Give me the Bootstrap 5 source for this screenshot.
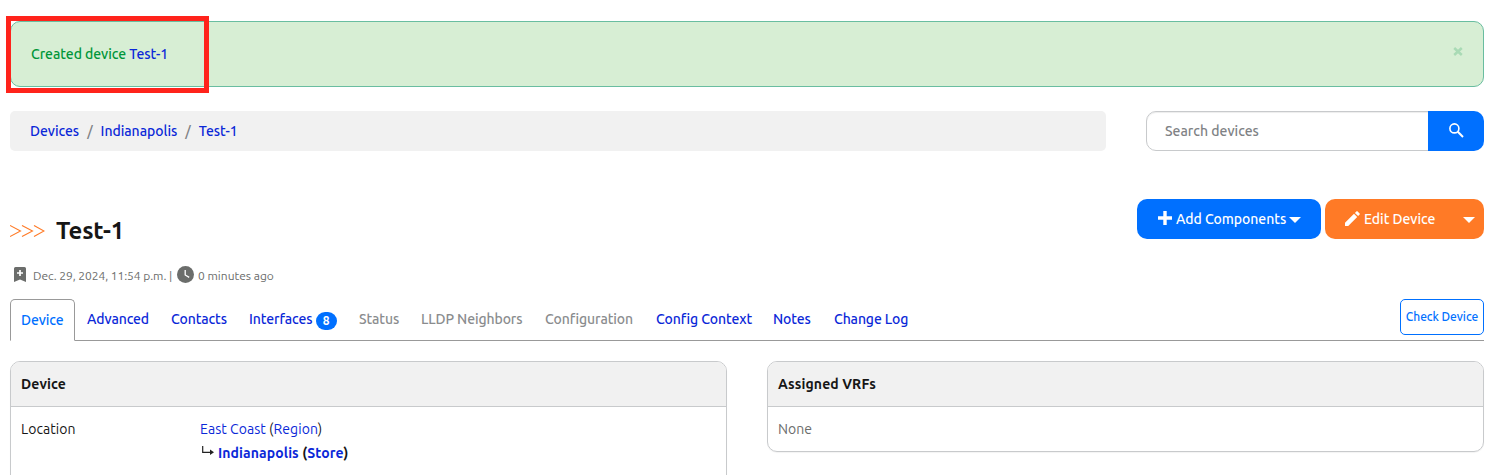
<!DOCTYPE html>
<html lang="en">
<head>
<meta charset="utf-8">
<meta name="viewport" content="width=device-width, initial-scale=1">
<title>Test-1</title>
<link href="https://cdn.jsdelivr.net/npm/bootstrap@5.3.0/dist/css/bootstrap.min.css" rel="stylesheet">
<style>
body{font-family:Ubuntu,"Noto Sans",sans-serif;font-size:14px;line-height:20px;font-weight:500;color:#161616;background:#fff;letter-spacing:-.05px;overflow:hidden}
a{color:#0b28d8;text-decoration:none}
svg{display:block;flex:none}
.page{padding:21px 11px 0 10px;height:475px;overflow:hidden}
.notice{height:66px;padding:0 20px;border:1px solid #69bda0;border-radius:10px;background:#d7eed4;color:#009639;margin:0;position:relative}
.notice .dismiss{color:#a9dab5;margin-top:-5px}
.marker{position:absolute;left:-5px;top:-6px;width:203px;height:77px;border:5px solid #ff231b}
.crumbs{width:1096px;height:40px;background:#f1f1f1;border-radius:5px;padding:0 20px;letter-spacing:-.03px;--bs-breadcrumb-divider-color:#808285;--bs-breadcrumb-item-padding-x:8px}
.finder{width:338px;height:40px}
.finder .form-control{font-size:14px;font-weight:500;letter-spacing:0;border:1px solid #c8cacc;border-radius:10px 0 0 10px;padding:0 18px;box-shadow:inset 0 1px 1px rgba(0,0,0,.075)}
.finder .form-control::placeholder{color:#808285;opacity:1}
.blue,.blue:hover{background:#0070ff;color:#fff;border:0}
.orange,.orange:hover{background:#ff7a26;color:#fff;border:0}
.finder .btn{width:56px;border-radius:0 10px 10px 0!important;padding:0}
.action{height:40px;border-radius:10px;font-size:14px;font-weight:500;line-height:20px;letter-spacing:-.05px}
.action .label-add{width:110px;white-space:nowrap;text-align:left}
.heading{padding-top:17px}
.title-text{font-size:24px;line-height:30px;font-weight:600;letter-spacing:-.2px;margin:0 0 0 11px}
.meta{font-size:12px;line-height:20px;font-weight:400;color:#6b6d6b;height:20px;letter-spacing:0;margin:20px 0 13px}
.device-tabs{border-bottom:1px solid #999;height:42px;flex-wrap:nowrap;letter-spacing:-.1px}
.device-tabs .nav-link{height:42px;padding:9px 0 0 10px;border:1px solid transparent;border-radius:5px 5px 0 0;color:#0b28d8;line-height:20px;white-space:nowrap;margin-bottom:-1px}
.device-tabs .nav-link.active{border-color:#999 #999 #fff;color:#0070ff;background:#fff;padding-top:10px}
.device-tabs .nav-link.disabled{color:#8a8c8e}
.count{font-size:12px;line-height:18px;width:21px;height:18px;border-radius:9px;background:#0070ff;padding:0;margin:3px 0 0 3px;font-weight:600}
.check{width:84px;height:36px;border:1px solid #0070ff;color:#0070ff;border-radius:5px;font-size:12px;font-weight:500;padding:0;white-space:nowrap;letter-spacing:-.05px;line-height:16px}
.panel{border:1px solid #c8cacc;border-radius:10px;overflow:hidden;width:717px;box-shadow:0 1px 1px rgba(0,0,0,.05)}
.panel-head{height:45px;background:#f1f1f1;border-bottom:1px solid #c8cacc;padding:12px 10px;font-weight:700;letter-spacing:.1px}
.panel-body-text{padding:12px 10px;font-weight:400;letter-spacing:.05px}
.key{width:179px}
.val{line-height:24px;margin-top:-2px}
.val .fw-bold{letter-spacing:.1px}
</style>
</head>
<body>
<svg width="0" height="0" class="position-absolute"><defs>
<symbol id="caret" viewBox="0 0 12 6"><path d="M0 0h12L6 6z" fill="currentColor"/></symbol>
</defs></svg>
<main class="page">
  <div class="alert notice d-flex align-items-center justify-content-between" role="alert">
    <span>Created device <a href="#">Test-1</a></span>
    <svg class="dismiss" width="10" height="9" viewBox="0 0 10 9"><path d="M1.2 1l7.6 7M8.8 1L1.2 8" stroke="currentColor" stroke-width="2.5"/></svg>
    <span class="marker"></span>
  </div>

  <div class="d-flex justify-content-between mt-4">
    <ol class="breadcrumb crumbs align-items-center mb-0">
      <li class="breadcrumb-item"><a href="#">Devices</a></li>
      <li class="breadcrumb-item"><a href="#">Indianapolis</a></li>
      <li class="breadcrumb-item"><a href="#">Test-1</a></li>
    </ol>
    <form class="input-group finder flex-nowrap">
      <input class="form-control" placeholder="Search devices" aria-label="Search devices">
      <button type="button" class="btn blue d-flex align-items-center justify-content-center" aria-label="Search"><svg style="margin-bottom:2px" width="15" height="15" viewBox="0 0 15 15" fill="none" stroke="currentColor"><circle cx="5.4" cy="5.4" r="4.5" stroke-width="1.6"/><path d="M8.8 8.8l5.2 5.2" stroke-width="2"/></svg></button>
    </form>
  </div>

  <div class="d-flex justify-content-between align-items-start mt-5" style="height:47px">
    <div class="d-flex align-items-center heading">
      <svg width="35" height="14" viewBox="0 0 35 14" fill="none" stroke="#ff7a26" stroke-width="1.1"><path d="M0 1.4l10.5 5.6L0 12.6M12 1.4L22.5 7 12 12.6M24 1.4L34 7 24 12.6"/></svg>
      <h1 class="title-text">Test-1</h1>
    </div>
    <div class="d-flex gap-1">
      <button class="btn action blue d-flex align-items-center ps-4 pe-0" style="width:184px"><svg width="14" height="14" viewBox="0 0 14 14" style="margin-left:-3px;margin-top:-2px"><path d="M5.3 0h3.4v5.3H14v3.4H8.7V14H5.3V8.7H0V5.3h5.3z" fill="currentColor"/></svg><span class="label-add ms-1">Add Components</span><svg style="margin:1px 0 0 3px" width="12" height="6"><use href="#caret"/></svg></button>
      <div class="btn-group" style="width:159px">
        <button class="btn action orange d-flex align-items-center pe-0" style="padding-left:20px"><svg style="margin-top:-1px" width="15" height="15" viewBox="0 0 15 15" fill="currentColor"><path d="M0 15v-3.2L9 2.8 12.2 6l-9 9zM9.9 1.9l1.5-1.5q.6-.6 1.2 0l2 2q.6.6 0 1.2l-1.5 1.5z"/></svg><span class="ms-1 text-nowrap">Edit Device</span></button>
        <button class="btn action orange d-flex align-items-center justify-content-end p-0" style="padding-right:9px!important" aria-label="More"><svg style="margin-top:2px" width="12" height="6"><use href="#caret"/></svg></button>
      </div>
    </div>
  </div>

  <div class="meta d-flex align-items-center">
    <svg width="12" height="15" viewBox="0 0 12 15" style="margin-left:4px;margin-top:-3px"><path d="M1.5 0h9Q12 0 12 1.5V15l-6-2.5L0 15V1.5Q0 0 1.5 0z" fill="#6b6d6b"/><path d="M6 3v6M3 6h6" stroke="#fff" stroke-width="1.7"/></svg>
    <span style="margin-left:7px;width:136px;letter-spacing:-.05px">Dec. 29, 2024, 11:54 p.m.</span><span style="width:8px">|</span>
    <svg width="17" height="17" viewBox="0 0 17 17" style="margin-top:-3px"><circle cx="8.5" cy="8.5" r="8.5" fill="#6b6d6b"/><path d="M8.2 4v5l4 2.4" fill="none" stroke="#fff" stroke-width="1.3"/></svg>
    <span class="ms-1">0 minutes ago</span>
  </div>

  <ul class="nav nav-tabs device-tabs">
    <li class="nav-item" style="width:66px"><a class="nav-link active" style="width:65px" href="#">Device</a></li>
    <li class="nav-item" style="width:84px"><a class="nav-link" href="#">Advanced</a></li>
    <li class="nav-item" style="width:78px"><a class="nav-link" href="#">Contacts</a></li>
    <li class="nav-item" style="width:110px"><a class="nav-link d-flex" href="#">Interfaces<span class="badge count">8</span></a></li>
    <li class="nav-item" style="width:62px"><a class="nav-link disabled">Status</a></li>
    <li class="nav-item" style="width:124px"><a class="nav-link disabled">LLDP Neighbors</a></li>
    <li class="nav-item" style="width:111px"><a class="nav-link disabled">Configuration</a></li>
    <li class="nav-item" style="width:117px"><a class="nav-link" href="#">Config Context</a></li>
    <li class="nav-item" style="width:61px"><a class="nav-link" href="#">Notes</a></li>
    <li class="nav-item"><a class="nav-link" href="#">Change Log</a></li>
    <li class="nav-item ms-auto"><button class="btn check">Check Device</button></li>
  </ul>

  <div class="d-flex justify-content-between align-items-start" style="margin-top:20px">
    <section class="panel" style="height:140px">
      <div class="panel-head">Device</div>
      <div class="panel-body-text d-flex">
        <div class="key">Location</div>
        <div class="val"><a href="#">East Coast</a> (<a href="#">Region</a>)<br>
          <div class="d-flex fw-bold"><svg width="12" height="11" viewBox="0 0 12 11" style="margin:5px 4px 0 2px"><path d="M.7 0v6.3H9" fill="none" stroke="#222" stroke-width="1.2"/><path d="M8 3.6l4 2.7L8 9z" fill="#222"/></svg><span><a href="#">Indianapolis</a> (<a href="#">Store</a>)</span></div>
        </div>
      </div>
    </section>
    <section class="panel" style="height:91px">
      <div class="panel-head">Assigned VRFs</div>
      <div class="panel-body-text" style="color:#6b6d6b">None</div>
    </section>
  </div>
</main>
<script src="https://cdn.jsdelivr.net/npm/bootstrap@5.3.0/dist/js/bootstrap.bundle.min.js"></script>
</body>
</html>
